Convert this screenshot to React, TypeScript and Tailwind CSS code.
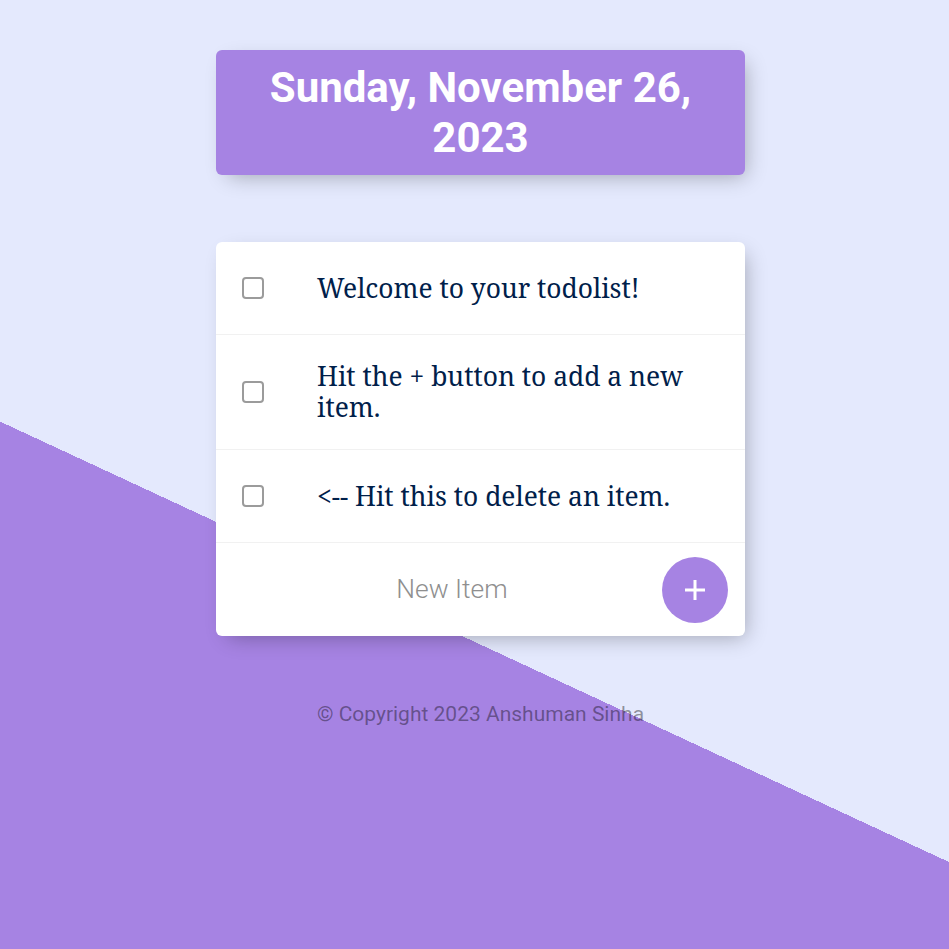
import React from "react";

const items = [
  "Welcome to your todolist!",
  "Hit the + button to add a new item.",
  "<-- Hit this to delete an item.",
];

export default function App() {
  return (
    <div className="h-[949px] w-full overflow-hidden bg-[#E4E9FD] bg-[linear-gradient(24.9deg,#A683E3_37.96%,#E4E9FD_37.96%)]">
      <div className="flex flex-col items-center pl-[12px] pt-[50px]">
        <div className="w-[529px] rounded-[6px] bg-[#A683E3] px-[13px] py-[12.5px] shadow-[6px_7px_20px_-6px_rgba(0,0,0,0.3)]">
          <h1 className="text-center text-[42px] font-bold leading-[50px] text-white [font-family:Roboto,'Liberation_Sans',sans-serif]">
            Sunday, November 26, 2023
          </h1>
        </div>

        <div className="mt-[67px] w-[529px] rounded-[6px] bg-white shadow-[6px_7px_20px_-6px_rgba(0,0,0,0.3)]">
          {items.map((t) => (
            <div
              key={t}
              className="flex min-h-[93px] items-center border-b border-[#F1F1F1]"
            >
              <span className="ml-[26px] mr-[26px] h-[22px] w-[22px] shrink-0 rounded-[4px] border-2 border-[#9b9b9b] bg-white" />
              <p className="py-[26px] pl-[27px] pr-[26px] text-[26.4px] leading-[31px] text-[#00204a] [font-family:'Noto_Serif','DejaVu_Serif',serif]">
                {t}
              </p>
            </div>
          ))}
          <div className="flex h-[93px] items-center pl-[26px] pr-[17px]">
            <div className="flex-1 text-center text-[26.4px] font-light text-[#8f8f8f] [font-family:Roboto,'Liberation_Sans',sans-serif]">
              New Item
            </div>
            <div className="flex h-[66px] w-[66px] items-center justify-center rounded-full bg-[#A683E3]">
              <svg width="22" height="22" viewBox="0 0 22 22">
                <path d="M11 1v20M1 11h20" stroke="white" strokeWidth="3" />
              </svg>
            </div>
          </div>
        </div>

        <footer className="mt-[66px] text-center text-[21px] leading-[25px] text-black/40 [font-family:Roboto,'Liberation_Sans',sans-serif]">
          © Copyright 2023 Anshuman Sinha
        </footer>
      </div>
    </div>
  );
}
